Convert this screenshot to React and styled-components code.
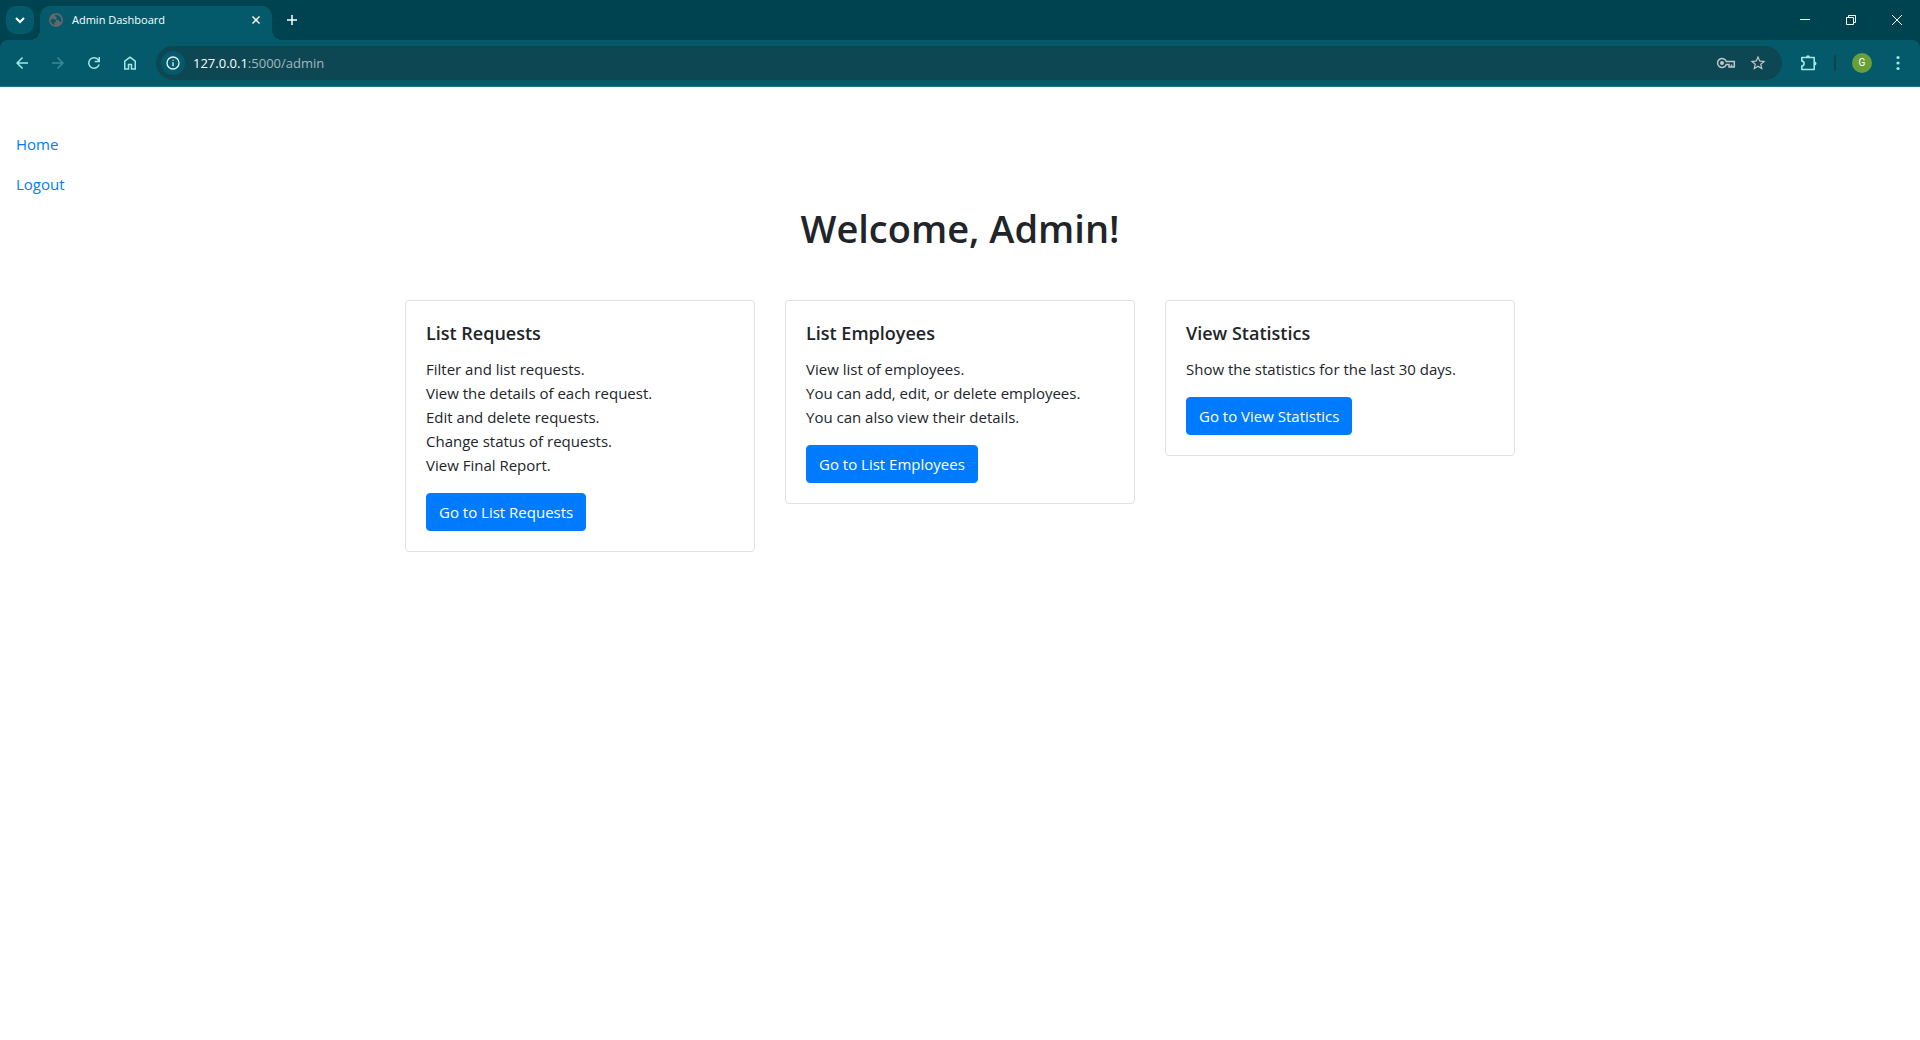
import React from "react";
import styled, { createGlobalStyle } from "styled-components";

const GlobalStyle = createGlobalStyle`
  *, *::before, *::after { box-sizing: border-box; }
  body {
    margin: 0;
    background: #fff;
    color: #212529;
    font: 400 15px/24px "Open Sans", "Noto Sans", sans-serif;
  }
  button, input { font: inherit; }
`;

const Browser = styled.div`
  min-height: 100vh;
  display: flex;
  flex-direction: column;
`;

const TabStrip = styled.div`
  display: flex;
  height: 40px;
  padding-left: 6px;
  background: #004350;
  color: #fff;
`;

const IconButton = styled.button`
  display: flex;
  align-items: center;
  justify-content: center;
  flex: none;
  width: ${(p) => p.$w || 36}px;
  height: ${(p) => p.$h || 34}px;
  padding: 0;
  border: 0;
  border-radius: ${(p) => p.$radius || 0}px;
  background: ${(p) => p.$bg || "transparent"};
  color: ${(p) => p.$color || "inherit"};
  svg { display: block; }
`;

const TabSearch = styled(IconButton)`
  margin: 6px 6px 0 0;
`;

const Tab = styled.div`
  position: relative;
  display: flex;
  align-items: center;
  gap: 8px;
  width: 232px;
  margin-top: 6px;
  padding: 0 6px 6px 8px;
  border-radius: 10px 10px 0 0;
  background: #045a6b;
  font-size: 11px;
  line-height: 16px;

  &::before, &::after {
    content: "";
    position: absolute;
    bottom: 0;
    width: 10px;
    height: 10px;
  }
  &::before {
    right: 100%;
    background: radial-gradient(circle at 0 0, transparent 10px, #045a6b 10px);
  }
  &::after {
    left: 100%;
    background: radial-gradient(circle at 100% 0, transparent 10px, #045a6b 10px);
  }
`;

const TabTitle = styled.span`
  flex: 1;
  white-space: nowrap;
`;

const NewTab = styled(IconButton)`
  margin: 3px 0 0 6px;
`;

const WindowControls = styled.div`
  display: flex;
  margin-left: auto;
`;

const ToolbarBack = styled.div`
  background: #004350;
`;

const Toolbar = styled.div`
  display: flex;
  align-items: center;
  height: 47px;
  padding: 0 4px;
  border-bottom: 1px solid #1f7585;
  border-radius: 8px 8px 0 0;
  background: #045a6b;
  color: #9ee9e6;
`;

const AddressBar = styled.form`
  flex: 1;
  display: flex;
  align-items: center;
  height: 34px;
  margin: 0 8px;
  padding: 0 8px 0 5px;
  border-radius: 17px;
  background: #0e4754;
  color: #c3c7c8;
  font-size: 13px;
  line-height: 20px;
`;

const Host = styled.label`
  margin-left: 8px;
  color: #fff;
`;

const Path = styled.input`
  flex: 1;
  min-width: 0;
  padding: 0;
  border: 0;
  outline: 0;
  background: transparent;
  color: #a3b7bd;
`;

const Separator = styled.span`
  width: 2px;
  height: 16px;
  margin: 0 8px;
  border-radius: 1px;
  background: #0b4350;
`;

const Avatar = styled.span`
  display: grid;
  place-items: center;
  width: 20px;
  height: 20px;
  border-radius: 50%;
  background: #689f38;
  color: #fff;
  font: 400 10px/20px Roboto, sans-serif;
`;

const SideNav = styled.nav`
  display: flex;
  flex-direction: column;
  align-items: flex-start;
  gap: 16px;
  padding: 45px 16px 0;
`;

const NavLink = styled.a`
  color: #007bff;
  text-decoration: none;
`;

const Container = styled.main`
  width: 100%;
  max-width: 1140px;
  margin: 0 auto;
  padding: 8px 15px;
`;

const Heading = styled.h1`
  margin: 0 0 48px;
  font-size: 38px;
  line-height: 48px;
  font-weight: 600;
  text-align: center;
`;

const CardGrid = styled.div`
  display: grid;
  grid-template-columns: repeat(3, minmax(0, 1fr));
  align-items: start;
  gap: 30px;
`;

const Card = styled.section`
  padding: 20px;
  border: 1px solid #dfdfdf;
  border-radius: 4px;
`;

const CardTitle = styled.h2`
  margin: 0 0 12px;
  font-size: 18px;
  line-height: 24px;
  font-weight: 600;
`;

const CardText = styled.p`
  margin: 0 0 16px;
`;

const Line = styled.span`
  display: block;
`;

const CardButton = styled.a`
  display: inline-block;
  padding: 6px 12px;
  border: 1px solid #007bff;
  border-radius: 4px;
  background: #007bff;
  color: #fff;
  text-decoration: none;
  vertical-align: top;
`;

const Glyph = ({ size = 18, d }) => (
  <svg width={size} height={size} viewBox="0 0 24 24" fill="currentColor" aria-hidden="true">
    <path d={d} />
  </svg>
);

const Stroke = ({ w, h, d, sw = 1 }) => (
  <svg width={w} height={h} viewBox={`0 0 ${w} ${h}`} fill="none" stroke="currentColor" strokeWidth={sw} aria-hidden="true">
    <path d={d} />
  </svg>
);

const BACK = "M7.825 13l5.6 5.6L12 20l-8-8 8-8 1.425 1.4-5.6 5.6H20v2z";
const FORWARD = "M16.175 13H4v-2h12.175l-5.6-5.6L12 4l8 8-8 8-1.425-1.4z";
const RELOAD =
  "M12 20q-3.35 0-5.675-2.325T4 12q0-3.35 2.325-5.675T12 4q1.725 0 3.3.713T18 6.75V4h2v7h-7V9h4.2q-.8-1.4-2.187-2.2T12 6Q9.5 6 7.75 7.75T6 12q0 2.5 1.75 4.25T12 18q1.925 0 3.475-1.1T17.65 14h2.1q-.7 2.65-2.85 4.325T12 20Z";
const HOME = "M6 19h3v-6h6v6h3v-9l-6-4.5L6 10zm-2 2V9l8-6 8 6v12h-7v-6h-2v6z";
const INFO =
  "M11 17h2v-6h-2v6Zm1-8q.425 0 .713-.288T13 8q0-.425-.288-.713T12 7q-.425 0-.713.288T11 8q0 .425.288.713T12 9Zm0 13a10 10 0 1 1 0-20 10 10 0 0 1 0 20Zm0-2a8 8 0 1 0 0-16 8 8 0 0 0 0 16Z";
const STAR =
  "M22 9.24l-7.19-.62L12 2 9.19 8.63 2 9.24l5.46 4.73L5.82 21 12 17.27 18.18 21l-1.63-7.03zM12 15.4l-3.76 2.27 1-4.28-3.32-2.88 4.38-.38L12 6.1l1.71 4.04 4.38.38-3.32 2.88 1 4.28z";

const Globe = () => (
  <svg width="16" height="16" viewBox="0 0 16 16" aria-hidden="true">
    <circle cx="8" cy="8" r="7" fill="#646669" />
    <path
      d="M2.600 7.600C4 6.900 6.500 6.700 7.700 8c.9 1 .2 1.900-.9 2.200-.6.300-.4 1.600-.4 2.900C4.200 12.400 2.600 10.300 2.600 7.600zM7 2.700c2.300-.3 4.600.8 5.700 2.800.8 1.500.9 3.300.2 4.700-.8-.2-1.200-1-2-1.700-.9-.8-2.200-.3-2.700-1.200-.4-.9.600-1.400.500-2.100C8.500 4.500 6.600 4.200 7 2.700z"
      fill="#045a6b"
    />
  </svg>
);

const Key = () => (
  <svg width="20" height="12" viewBox="0 0 20 12" fill="none" stroke="currentColor" strokeWidth="1.500" aria-hidden="true">
    <path d="M10.300 4.500A4.500 4.500 0 1 0 10.300 7.500H13V10H18.300V4.500Z" />
    <path d="M15.500 7.500V10" />
    <circle cx="6" cy="6" r="2" fill="currentColor" stroke="none" />
  </svg>
);

const Puzzle = () => (
  <svg width="20" height="18" viewBox="0 0 20 18" aria-hidden="true">
    <path
      d="M3.800 3.500H16.200V15.500H3.800V12.100Q6.100 11.600 6.100 9.500T3.800 6.900Z"
      fill="none"
      stroke="currentColor"
      strokeWidth="1.600"
      strokeLinejoin="round"
    />
    <path d="M8 3.200a2 2 0 0 1 4 0zM16.500 7.500a2 2 0 0 1 0 4z" fill="currentColor" />
  </svg>
);

const Kebab = () => (
  <svg width="16" height="16" viewBox="0 0 16 16" fill="currentColor" aria-hidden="true">
    <circle cx="8" cy="2.500" r="1.600" />
    <circle cx="8" cy="8" r="1.600" />
    <circle cx="8" cy="13.500" r="1.600" />
  </svg>
);

const CARDS = [
  {
    title: "List Requests",
    lines: [
      "Filter and list requests.",
      "View the details of each request.",
      "Edit and delete requests.",
      "Change status of requests.",
      "View Final Report.",
    ],
    action: "Go to List Requests",
    href: "#requests",
  },
  {
    title: "List Employees",
    lines: [
      "View list of employees.",
      "You can add, edit, or delete employees.",
      "You can also view their details.",
    ],
    action: "Go to List Employees",
    href: "#employees",
  },
  {
    title: "View Statistics",
    lines: ["Show the statistics for the last 30 days."],
    action: "Go to View Statistics",
    href: "#statistics",
  },
];

export default function App() {
  return (
    <Browser>
      <GlobalStyle />
      <TabStrip>
        <TabSearch aria-label="Search tabs" $w={28} $h={28} $radius={10} $bg="#045a6b">
          <Stroke w={10} h={8} sw={2} d="M1 2l4 4 4-4" />
        </TabSearch>
        <Tab>
          <Globe />
          <TabTitle>Admin Dashboard</TabTitle>
          <IconButton aria-label="Close tab" $w={20} $h={20}>
            <Stroke w={10} h={10} sw={1.5} d="M1.500 1.500l7 7M8.500 1.500l-7 7" />
          </IconButton>
        </Tab>
        <NewTab aria-label="New tab" $w={28}>
          <Stroke w={10} h={10} sw={1.5} d="M0 5h10M5 0v10" />
        </NewTab>
        <WindowControls>
          <IconButton aria-label="Minimize" $w={46} $h={40}>
            <Stroke w={10} h={10} d="M0 4.500h10" />
          </IconButton>
          <IconButton aria-label="Restore" $w={46} $h={40}>
            <Stroke w={10} h={10} d="M.5 2.500h7v7h-7zM2.500 2.500v-2h7v7h-2" />
          </IconButton>
          <IconButton aria-label="Close window" $w={46} $h={40}>
            <Stroke w={10} h={10} d="M0 0l10 10M10 0L0 10" />
          </IconButton>
        </WindowControls>
      </TabStrip>
      <ToolbarBack>
        <Toolbar>
          <IconButton aria-label="Back"><Glyph d={BACK} /></IconButton>
          <IconButton aria-label="Forward" $color="#3b8997"><Glyph d={FORWARD} /></IconButton>
          <IconButton aria-label="Reload"><Glyph d={RELOAD} /></IconButton>
          <IconButton aria-label="Home page"><Glyph d={HOME} /></IconButton>
          <AddressBar onSubmit={(e) => e.preventDefault()}>
            <IconButton type="button" aria-label="Site information" $w={24} $h={24} $radius={12} $bg="#045a6b" $color="#e6f4f4">
              <Glyph size={16} d={INFO} />
            </IconButton>
            <Host htmlFor="address">127.0.0.1</Host>
            <Path id="address" defaultValue=":5000/admin" spellCheck={false} />
            <IconButton type="button" aria-label="Passwords" $w={32}><Key /></IconButton>
            <IconButton type="button" aria-label="Bookmark" $w={32}><Glyph d={STAR} /></IconButton>
          </AddressBar>
          <IconButton aria-label="Extensions"><Puzzle /></IconButton>
          <Separator />
          <IconButton aria-label="Profile"><Avatar>G</Avatar></IconButton>
          <IconButton aria-label="Menu"><Kebab /></IconButton>
        </Toolbar>
      </ToolbarBack>
      <SideNav>
        <NavLink href="#home">Home</NavLink>
        <NavLink href="#logout">Logout</NavLink>
      </SideNav>
      <Container>
        <Heading>Welcome, Admin!</Heading>
        <CardGrid>
          {CARDS.map((card) => (
            <Card key={card.title}>
              <CardTitle>{card.title}</CardTitle>
              <CardText>
                {card.lines.map((line) => <Line key={line}>{line}</Line>)}
              </CardText>
              <CardButton href={card.href}>{card.action}</CardButton>
            </Card>
          ))}
        </CardGrid>
      </Container>
    </Browser>
  );
}
